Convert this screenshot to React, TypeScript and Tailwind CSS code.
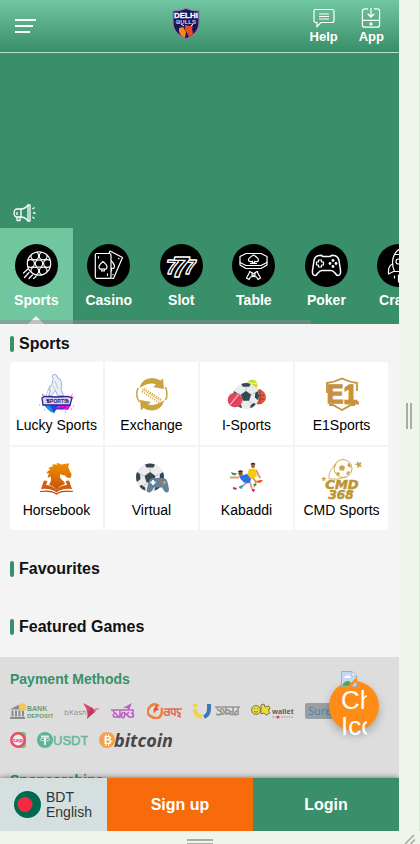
import React from "react";

type Item = { label: string; icon: React.ReactNode };

const CircleIcon = ({ children }: { children: React.ReactNode }) => (
  <svg
    className="size-[43px] rounded-full bg-black"
    viewBox="0 0 43 43"
    fill="none"
    stroke="#fff"
    strokeWidth="1.2"
    strokeLinejoin="round"
    strokeLinecap="round"
    aria-hidden="true"
  >
    {children}
  </svg>
);

const SoccerBall = ({ cx, cy, r }: { cx: number; cy: number; r: number }) => (
  <g transform={`translate(${cx} ${cy}) scale(${r / 14})`}>
    <circle r="14" fill="#e9ebee" />
    <g fill="#37474f">
      <path d="M0-5.5 5.5-1.5 3.4 5h-6.8L-5.5-1.5z" />
      <path d="M-5-13q5-2 10 0L3.500-10h-7z" />
      <path d="M13-5.500q2 5 0 10L9.500 1.500l.5-5z" />
      <path d="M-13-5.500q-2 5 0 10L-9.500 1.500l-.5-5z" />
      <path d="M10.500 9q-2.500 3.500-6 4.300L5 10l3.500-2.800z" />
      <path d="M-10.500 9q2.500 3.500 6 4.300L-5 10l-3.500-2.800z" />
    </g>
    <path
      d="M0-5.500V-10M5.500-1.500 10-3.500M3.400 5 6 9M-3.400 5-6 9M-5.500-1.500-10-3.500"
      stroke="#b5bcc2"
      strokeWidth=".8"
    />
  </g>
);

const categories: Item[] = [
  {
    label: "Sports",
    icon: (
      <CircleIcon>
        <clipPath id="ball">
          <circle cx="24" cy="19.500" r="11.700" />
        </clipPath>
        <g clipPath="url(#ball)">
          <circle cx="24" cy="19.500" r="3.700" />
          <circle cx="32.500" cy="19.500" r="3.900" />
          <circle cx="15.500" cy="19.500" r="3.900" />
          <circle cx="28.200" cy="12" r="3.900" />
          <circle cx="19.800" cy="12" r="3.900" />
          <circle cx="28.200" cy="27" r="3.900" />
          <circle cx="19.800" cy="27" r="3.900" />
        </g>
        <circle cx="24" cy="19.500" r="11.700" />
        <path d="m13 25-4.500 4M14 28.500l-4.500 5M17.500 31 14 34.500M21 32.500l-2.500 2" />
      </CircleIcon>
    ),
  },
  {
    label: "Casino",
    icon: (
      <CircleIcon>
        <path d="m22 9.500 1-2.500 12.500 6.500-9 21-4-.7" />
        <path d="M24.500 17q3 3 3 5.500t-3 1.500v3" />
        <path d="m31.500 14.500.5.300M26 30.500v.5" />
        <rect x="8.300" y="9.500" width="15.700" height="24.800" rx="1.500" fill="#000" />
        <path d="M16 17.500q-4 3.200-4 5.500 0 3 3.300 1.800L14.500 27h3l-.8-2.200Q20 26 20 23q0-2.300-4-5.500z" />
        <path d="M11.500 12.500v1.500M20.500 29.800v1.500" />
      </CircleIcon>
    ),
  },
  {
    label: "Slot",
    icon: (
      <CircleIcon>
        <g
          fill="#000"
          fontFamily="Liberation Sans"
          fontWeight="bold"
          fontStyle="italic"
          strokeWidth="1.300"
        >
          <text x="6" y="30" fontSize="21">7</text>
          <text x="24" y="30" fontSize="21">7</text>
          <text x="12" y="33" fontSize="30">7</text>
        </g>
      </CircleIcon>
    ),
  },
  {
    label: "Table",
    icon: (
      <CircleIcon>
        <path d="M14 9.500h15l6 3v6l-6 3H14l-6-3v-6z" />
        <path d="M8 18.500v2.500l6 3.500h15l6-3.500v-2.500" />
        <path d="M21.500 11q-5 3-5 5 0 2.300 4 1.300v1.700h2v-1.700q4 1 4-1.300 0-2-5-5z" />
        <path d="M18.500 19.500h6" />
        <path d="M17.500 27.500v1l-3 5.500 2.500 1.500 1.500-2.500 2.500-.5.500-1.500.5 1.500 2.500.5 1.500 2.500 2.500-1.500-3-5.500v-1M17.500 27.500l3 1.500M25 27.500l-2.500 1.500M20 29.500h3v3h-3z" />
      </CircleIcon>
    ),
  },
  {
    label: "Poker",
    icon: (
      <CircleIcon>
        <path
          strokeWidth="1.500"
          d="M14 11.500q2.500-.5 4 1h7q1.500-1.500 4-1 4 .5 5 5l1.500 10q.5 5-2.500 5-1.500 0-3-2.500-2-2.500-4-2.500h-9q-2 0-4 2.500-1.500 2.500-3 2.500-3 0-2.500-5l1.500-10q1-4.500 5-5z"
        />
        <path d="M13.500 16h3v2h2v3h-2v2h-3v-2h-2v-3h2z" />
        <g fill="#fff" stroke="none">
          <circle cx="28" cy="16.500" r="1.400" />
          <circle cx="28" cy="22.500" r="1.400" />
          <circle cx="25" cy="19.500" r="1.400" />
          <circle cx="31" cy="19.500" r="1.400" />
        </g>
      </CircleIcon>
    ),
  },
  {
    label: "Crash",
    icon: (
      <CircleIcon>
        <path d="M21.500 5.500q-6 5-6 13 0 5 2 9h8q2-4 2-9 0-8-6-13z" />
        <circle cx="21.500" cy="17.500" r="2.500" />
        <path d="M17.500 10.500h8M15.500 20q-4 2-4 7v3l5-2.500M27.500 20q4 2 4 7v3l-5-2.500" />
        <path d="M17.500 32v2M21.500 31v7M25.500 32v2" />
      </CircleIcon>
    ),
  },
];

const GameIcon = ({ children }: { children: React.ReactNode }) => (
  <svg
    className="h-10 w-11 overflow-visible"
    viewBox="0 0 44 40"
    fill="none"
    aria-hidden="true"
  >
    {children}
  </svg>
);

const sportsGames: Item[] = [
  {
    label: "Lucky Sports",
    icon: (
      <GameIcon>
        <path d="M8 24q-2-3-1-5l4 4zM34 24l4-5-1 4 3-1-4 4z" fill="#f38bd0" />
        <path d="M9 31q5 7 10 8l4-7z" fill="#1495f2" />
        <path d="m15 31 4 8 5-8z" fill="#124cf0" />
        <path d="m22 30 14 1-3 5-9-1z" fill="#e813df" />
        <path
          d="M17 3q.5-3 3-2.500t2 3q4 1 4.500 5t-.5 7l2.500 6h-6l-2-5-4 5h-3l2-5-1.500-.5q1-4 3-6 .5-4 1.500-5z"
          fill="#eef0f6"
          stroke="#7f9bdc"
          strokeWidth=".8"
        />
        <path d="m15 11-4 11M20 7l3 8M18 12l2 4" stroke="#a9b6dc" strokeWidth=".8" />
        <path d="m7 24 3-1.500 11 .5 12-.5 4 1.500-2 7H8z" fill="#dcd6fa" stroke="#27278e" strokeWidth="1.300" />
        <text
          x="22"
          y="29"
          fontSize="5"
          fontWeight="bold"
          fontFamily="Liberation Sans"
          textAnchor="middle"
          fill="#17165e"
        >
          SPORTS
        </text>
        <path d="M11 26h2v3M31 26h2v3" stroke="#17165e" />
        <path d="M14 32.500q8 2 18 0l-4 3H18z" fill="#5830c8" />
        <path d="M4 31h1M38 32h1M9 36h1M30 38h1M36 35h1" stroke="#e254c3" />
      </GameIcon>
    ),
  },
  {
    label: "Exchange",
    icon: (
      <GameIcon>
        <g fill="#cba33b">
          <path d="M9.500 14Q12 4 22 4q5 0 8.500 2.500L33 4.500 34 15l-11-2 3-2.500q-6-3-16.500 3.500z" />
          <path d="M34.500 26Q31 37 21.500 36.500q-5-.5-8-2.500L11 36.500l-1-10.500 11 2-3 2.500q7 2 16.500-4.500z" />
        </g>
        <path d="M8 14q-3 8 1.500 14M35.500 13q3 8 0 13" stroke="#cba33b" strokeWidth="1.500" />
        <path d="m12 15 19 12" stroke="#cba33b" strokeWidth=".8" />
        <path
          d="m14 14.500 18 11.500M12 17.500l17 11"
          stroke="#cba33b"
          strokeWidth="1.500"
          strokeDasharray="1.200 1.200"
        />
      </GameIcon>
    ),
  },
  {
    label: "I-Sports",
    icon: (
      <GameIcon>
        <circle cx="33.500" cy="23" r="7.500" fill="#e4573d" />
        <path d="M30 17q3 6 9 4M30 27q4-4 10-1M35 15v15" stroke="#8d3b35" strokeWidth=".9" />
        <circle cx="27" cy="11" r="5.500" fill="#cbdc2c" />
        <path d="M23 8q4 3 9 1" stroke="#f2f7b0" />
        <SoccerBall cx={21} cy={22} r={13} />
        <circle cx="10" cy="26" r="7.300" fill="#e2445a" />
        <path d="m5 31 9-11" stroke="#f5a9b2" strokeWidth="1.300" />
        <path d="m6.500 31.500 9-10" stroke="#b72c44" strokeWidth=".8" strokeDasharray="1 1" />
      </GameIcon>
    ),
  },
  {
    label: "E1Sports",
    icon: (
      <GameIcon>
        <path
          d="M7 19V9q8-1 15-4.500Q29 8 37 9v8M9 31h4l9 5 9-5h4"
          stroke="#c6923f"
          strokeWidth="1.800"
        />
        <text
          x="22"
          y="29"
          fontSize="25"
          fontWeight="bold"
          fontFamily="Liberation Sans"
          textAnchor="middle"
          fill="#c6923f"
          stroke="#c6923f"
          strokeWidth="1.400"
        >
          E1
        </text>
        <path d="M25 29h14" stroke="#c6923f" strokeWidth="3" />
      </GameIcon>
    ),
  },
  {
    label: "Horsebook",
    icon: (
      <GameIcon>
        <defs>
          <linearGradient id="horse" x1="0" y1="0" x2="0" y2="1">
            <stop offset="0" stopColor="#ee9200" />
            <stop offset="1" stopColor="#c9510c" />
          </linearGradient>
        </defs>
        <path
          fill="url(#horse)"
          d="m34 4.300-.7 4.200q1.200 3 3.200 6.500 0 3-1.500 4l-3-.5-2.500-2.500q-2.500.5-4-1-1.500 3 1 5.500 3 2 3.500 4.500-5 1.500-8.500 6-3-4-7.500-5.500 3-4 1.500-8-2 0-2.500 2-.8-3 1.200-5-2-.5-3 .5 1-3.500 4-4.500-.5-1-2-1 2-2.500 5-2-.5-1.200-1.500-1.500 3-1.500 5.500 0l-.5-2q3 .3 4.500 1.500z"
        />
        <path
          fill="#cf5d0d"
          d="M9 21.500 6 30q10-1 15.500 3.500Q27 29 37 30l-3-8.500-3.500.5 1.500 4q-7 .5-10.500 5-3.500-4.500-10.500-5l1.500-4z"
        />
        <path d="M5 32.500q11-1.500 16.500 2.500Q27 31 38 32.500" stroke="#b9470c" strokeWidth="1.200" />
      </GameIcon>
    ),
  },
  {
    label: "Virtual",
    icon: (
      <GameIcon>
        <SoccerBall cx={20} cy={18.5} r={14} />
        <path
          d="M22 19h12q3 1 3.500 4L39 30q0 4-3 3.500-2-1-4-5h-8q-2 4-4 5-4 .5-3-3.500l1.500-7q.5-3 3.500-4z"
          fill="#64809b"
        />
        <path d="M23 21v5M20.500 23.500h5" stroke="#fff" strokeWidth="1.800" />
        <circle cx="31" cy="23.500" r="1.300" fill="#ef4b4b" />
        <circle cx="34.500" cy="23.500" r="1.300" fill="#f0ba2e" />
        <circle cx="32.800" cy="25.500" r="1" fill="#4fb96c" />
      </GameIcon>
    ),
  },
  {
    label: "Kabaddi",
    icon: (
      <GameIcon>
        <circle cx="28" cy="7" r="2" fill="#a8643a" />
        <path d="M26 5.500q2-2 4 0" stroke="#352a2a" strokeWidth="1.500" />
        <path d="m24 10 6-.5 2 8-6 3-4-5z" fill="#fbc90e" />
        <path d="m31 11 3 6 1.500 2M28 19l3 4-2 5" stroke="#d89464" strokeWidth="1.800" />
        <circle cx="15.500" cy="14.500" r="2.200" fill="#8a5536" />
        <path d="M13.500 13q2-2 4 0" stroke="#322a2d" strokeWidth="1.500" />
        <path d="m14 17 8-2 4 5-1 4-5 .5-4-4z" fill="#2b70e4" />
        <path d="M14 18.500H5M21 24l-3 3-4 1M25 23l2 7" stroke="#e09c72" strokeWidth="1.800" />
        <path d="m15 27 3-1-1 4-3-1z" fill="#18a7c4" />
        <path d="m8 28 4 1-1 2-3-1zM27 30h3l-1 3-2-1z" fill="#e91e63" />
        <path d="m6 13 3 1 3 0-2 2.500-3-1z" fill="#20996a" />
        <path d="m31 22 4-1 3 0-2 2.500-3 .5z" fill="#ef5b23" />
        <path d="m28 25 4 0-2 2z" fill="#1e8a67" />
      </GameIcon>
    ),
  },
  {
    label: "CMD Sports",
    icon: (
      <GameIcon>
        <circle cx="23" cy="9.500" r="9" fill="#fffdf6" stroke="#c9a24a" strokeWidth=".9" />
        <g fill="#c9a24a">
          <path d="m22 6 3 2-1 3.500h-4L19 8zM28 4l2.500 1v4l-3-2zM17 4l-2 4-.5-2zM17 13l3 1-1 3-3-2zM28 12l2 1-2 3-2-1z" />
          <path d="m37 2 1.500 2 3-1-1 3 2 2-3-.5-2 2v-3l-3-1.500 2.500-.5zM4 17l.7 2h2L5 20.300l.5 2-1.500-1-2 1 .7-2-1.500-1.300h2z" />
        </g>
        <path d="M14 7q-6 6-5 13 10 1 17-2" stroke="#c9a24a" strokeWidth=".8" />
        <g
          fill="#bd9434"
          stroke="#bd9434"
          strokeWidth=".6"
          fontFamily="DejaVu Sans"
          fontWeight="bold"
          fontStyle="italic"
          textAnchor="middle"
        >
          <text x="22" y="30" fontSize="13">CMD</text>
          <text x="21" y="40" fontSize="12">368</text>
        </g>
      </GameIcon>
    ),
  },
];

const Logo = ({
  name,
  className,
  children,
}: {
  name: string;
  className: string;
  children: React.ReactNode;
}) => (
  <svg role="img" aria-label={name} className={`h-4 shrink-0 ${className}`} fill="none">
    {children}
  </svg>
);

const PaymentLogos = () => (
  <div className="mt-3.5 flex flex-wrap gap-x-[11px] gap-y-[13px] font-['Open_Sans',sans-serif] font-normal">
    <Logo name="Bank deposit" className="w-[43px]">
      <path d="M0 6.500 8 2l7 4.500zM1.500 7.500h2v6h-2zM5 7.500h2v6H5zM8.500 7.500h2v6h-2zM12 7.500h2v6h-2zM0 14h15v2H0z" fill="#8b8b8b" />
      <circle cx="12.500" cy="4" r="3.800" fill="#f3c55d" />
      <g fill="#63a06d" fontFamily="Liberation Sans" fontWeight="bold">
        <text x="17" y="8" fontSize="7">BANK</text>
        <text x="17" y="15" fontSize="6">DEPOSIT</text>
      </g>
    </Logo>
    <Logo name="bKash" className="w-9">
      <text x="0" y="12" fontSize="8" fill="#8f8f8f">bKash</text>
      <path d="m19 0 8 4 2 5-5 3-2-7z" fill="#d94a73" />
      <path d="m27 4 5 4-9 8 1-7z" fill="#c93561" />
      <path d="m30 7 2-2 4 1-4 1-2 3z" fill="#e3708f" />
    </Logo>
    <Logo name="Rocket" className="w-[25px]">
      <path
        d="M0 7h23M2 8l6 6H3q-2-2 1-4M9 8v7M12 9q-3 4 0 6 3-2 1-6l5 5M18 9q-3 2 0 5h4q2-3-2-4M22 8v5"
        stroke="#bd5cc5"
        strokeWidth="1.500"
      />
      <path d="m12 5 9-5-3 7-2-2z" fill="#bd5cc5" />
    </Logo>
    <Logo name="Nagad" className="w-[35px]">
      <path d="M12 3Q6-1 2 5T5 14t9-2 0-7" stroke="#ef8138" strokeWidth="2.500" />
      <path d="M11 1q-2 3 1 6-4 0-5 4-2-6 4-10z" fill="#e8552f" />
      <path
        d="M17 6h18M22 6v7M22 10q-3-3-5 0 1 3 4 2M25 7q-2 3 1 4h2M28 6v7M31 7q-2 3 1 3t-1 3l3 1"
        stroke="#e36850"
        strokeWidth="1.500"
      />
    </Logo>
    <Logo name="Upay" className="w-[47px]">
      <path d="M2 1v3M2 6q0 7 7 8" stroke="#efd43f" strokeWidth="4" />
      <path d="M16 1v5q0 6-5 8" stroke="#4376b5" strokeWidth="4" />
      <path
        d="M22 4h25M25 4q-2 3 2 4t-1 4l-3-1M27 7q3-3 4 1t-3 3M33 4v8M33 7q5-1 3 4l-3-1M40 4v8M40 9q-4-1-3 2l3 1M45 4v8M45 8q-4 0-3 4l3-1"
        stroke="#969696"
        strokeWidth="1.600"
      />
    </Logo>
    <Logo name="OK wallet" className="w-[43px]">
      <circle cx="5" cy="7" r="4.500" fill="#eadc3c" stroke="#686334" strokeWidth=".8" />
      <path d="m10 2 3-1 1 3 4-1 1 3-2 1 2 3-4 2-2-2-3 1z" fill="#eadc3c" stroke="#686334" strokeWidth=".8" />
      <path d="M3 8q2 3 4 0M3 5.500h1M6 5.500h1" stroke="#686334" strokeWidth=".8" />
      <text x="21" y="11" fontSize="7" fontWeight="bold" fill="#5c5c5c">wallet</text>
      <path d="M21 14h4M30 14h12" stroke="#b5a1a3" strokeWidth="1.200" strokeDasharray="2 .5" />
      <circle cx="27" cy="14" r="1.600" fill="#e54452" />
    </Logo>
    <Logo name="SureCash" className="w-[65px]">
      <rect width="65" height="16" rx="2" fill="#9c9fa1" />
      <text x="3" y="12" fontSize="11" fill="#4284bd">SureCash</text>
    </Logo>
    <Logo name="Tap" className="w-4">
      <path d="M8 0h5q3 0 3 3v10q0 3-3 3H8z" fill="#5cc886" />
      <circle cx="8" cy="8" r="6.700" fill="#f4e9e9" stroke="#e84c60" strokeWidth="2.500" />
      <text x="3" y="10" fontSize="6" fontWeight="bold" fill="#df4962">tap</text>
    </Logo>
    <Logo name="USDT" className="w-[51px]">
      <circle cx="8" cy="8" r="8" fill="#5cb399" />
      <path d="M4 4.500h8M8 4v9" stroke="#e2efeb" strokeWidth="2" />
      <ellipse cx="8" cy="7.500" rx="5" ry="1.400" stroke="#e2efeb" strokeWidth=".8" />
      <text x="16" y="13" fontSize="13" fontFamily="Liberation Sans" fill="#66b69d" stroke="#66b69d" strokeWidth=".5">USDT</text>
    </Logo>
    <Logo name="Bitcoin" className="w-20 overflow-visible">
      <circle cx="8" cy="8" r="8" fill="#f2a348" />
      <text x="5" y="12" fontSize="11" fontWeight="bold" fill="#fff" fontFamily="Liberation Sans">B</text>
      <path d="M7 2.500v2M9.500 2.500v2M7 12v2M9.500 12v2" stroke="#fff" />
      <text x="15" y="15" fontSize="18" fontWeight="bold" fontStyle="italic" fill="#484848">bitcoin</text>
    </Logo>
  </div>
);

const SectionTitle = ({ children }: { children: React.ReactNode }) => (
  <h2 className="flex h-6 items-center gap-[5px] text-base font-bold text-[#111]">
    <span className="h-4 w-1 rounded-sm bg-[#388f69]" />
    {children}
  </h2>
);

const Header = () => (
  <header className="grid h-[53px] shrink-0 grid-cols-[1fr_56px_1fr] border-b border-[#bfdccd] bg-linear-to-b from-[#70c7a1] to-[#388e68] px-[15px]">
    <button type="button" aria-label="Menu" className="flex flex-col items-start gap-1 pt-[19px]">
      <span className="h-0.5 w-[21px] bg-white" />
      <span className="h-0.5 w-[18px] bg-white" />
      <span className="h-0.5 w-[15px] bg-white" />
    </button>
    <a href="#home" aria-label="Delhi Bulls" className="pt-2">
      <svg className="h-8 w-7" viewBox="0 0 28 32">
        <path
          d="M1 3q7 0 13-2.500Q20 3 27 3v11q0 12-13 17Q1 26 1 14z"
          fill="#17145a"
          stroke="#8f8099"
          strokeWidth="1.200"
        />
        <text x="14" y="10" fontSize="8" fontWeight="bold" fontFamily="Liberation Sans" textAnchor="middle" fill="#fff" stroke="#fff" strokeWidth=".3">
          DELHI
        </text>
        <text x="14" y="16" fontSize="6" fontWeight="bold" fontFamily="Liberation Sans" textAnchor="middle" fill="#d9d7e8">
          BULLS
        </text>
        <path d="m7 20 4-1 3 5-1 6q-7-3-6-10z" fill="#f38a20" />
        <path d="m13 17 5 1 3-1-1 4 1 5-4 3-2-4-2-3z" fill="#e84824" />
        <path d="m9 16 3 2M21 16l-2 2" stroke="#fff" />
        <circle cx="4" cy="14" r=".8" fill="#c43852" />
        <circle cx="24" cy="14" r=".8" fill="#c43852" />
      </svg>
    </a>
    <div className="flex justify-end gap-[21px] pt-2 text-[13px] leading-[18px] font-bold text-white">
      <a href="#help" className="flex flex-col items-center">
        <svg className="h-5 w-[22px]" viewBox="0 0 22 20" fill="none" stroke="#fff">
          <path d="M3 1.500h16q2 0 2 2v9q0 2-2 2H8l-4 4v-4H3q-2 0-2-2v-9q0-2 2-2z" strokeWidth="1.200" />
          <path d="M6 6h10M6 8.500h10M6 11h10" />
        </svg>
        Help
      </a>
      <a href="#app" className="flex flex-col items-center">
        <svg className="h-5 w-5" viewBox="0 0 20 21" fill="none" stroke="#fff" strokeWidth="1.300">
          <path d="M7 .8H3.500Q1 .8 1 3.500v14Q1 20.200 3.500 20.200h13q2.500 0 2.500-2.700v-14Q19 .8 16.500 .8H13M1 13h18M10 0v9M6.500 6l3.500 3.500L13.500 6" />
          <circle cx="10" cy="16.700" r="1" fill="#fff" />
        </svg>
        App
      </a>
    </div>
  </header>
);

const CategoryNav = () => (
  <nav className="relative flex h-24 shrink-0 overflow-hidden">
    {categories.map(({ label, icon }, i) => (
      <button
        key={label}
        type="button"
        className={`relative flex w-2/11 shrink-0 flex-col items-center pt-4 ${
          i === 0 ? "bg-[#70c69f]" : ""
        }`}
      >
        {icon}
        <span className="mt-[3px] text-sm leading-5 font-bold text-white">{label}</span>
        {i === 0 && (
          <span className="absolute bottom-0 border-x-8 border-b-8 border-x-transparent border-b-[#f4f4f4]" />
        )}
      </button>
    ))}
    <div className="absolute bottom-0 left-0 h-1 w-[78%] bg-[#8e8a8e]/50" />
  </nav>
);

const ChatButton = () => (
  <button
    type="button"
    aria-label="Chat"
    className="absolute right-5 bottom-[100px] size-[50px] rounded-full bg-[#ff8c16] shadow-[0_4px_8px_rgba(0,0,0,0.25)]"
  >
    <span className="absolute -top-2.5 left-3 block w-[26px] overflow-hidden text-left text-[26px] leading-[26px] text-white">
      <svg className="size-4" viewBox="0 0 16 16">
        <path d="M.5.500h10.500l4.500 4.500v10.500H.5z" fill="#c4d7f5" stroke="#a8aeb8" />
        <path d="M3 7q0-2 2-2 1-2 3 0 2 0 2 2z" fill="#fff" />
        <path d="M1 15q2-5 6-5 3 0 4 5z" fill="#58a83d" />
        <path d="M16 6 6 16h4l6-6z" fill="#ff8c16" />
        <path d="M11 .5V5h4.500z" fill="#fff" stroke="#a8aeb8" strokeWidth=".7" />
      </svg>
      Chat
      <br />
      Icon
    </span>
  </button>
);

const BottomBar = () => (
  <div className="relative grid h-[53px] shrink-0 grid-cols-[107px_1fr_1fr] text-base font-bold text-white shadow-[0_0_6px_rgba(0,0,0,0.55)]">
    <button
      type="button"
      className="flex items-center gap-[5px] bg-[#d5dfdf] pl-3.5 text-left text-sm leading-[15px] font-medium text-[#333]"
    >
      <svg className="size-[27px]" viewBox="0 0 27 27" aria-hidden="true">
        <circle cx="13.500" cy="13.500" r="13.500" fill="#006a4e" />
        <circle cx="11" cy="13.500" r="7.500" fill="#f42a41" />
      </svg>
      <span>
        BDT
        <br />
        English
      </span>
    </button>
    <button type="button" className="bg-[#f76b0a]">
      Sign up
    </button>
    <button type="button" className="bg-[#388f69]">
      Login
    </button>
  </div>
);

export default function App() {
  return (
    <div className="flex h-screen flex-col overflow-hidden bg-[#eff5ea] font-['Liberation_Sans',Arial,sans-serif]">
      <div className="flex min-h-0 flex-1">
        <div className="relative flex min-w-0 flex-1 flex-col overflow-hidden bg-[#388f69]">
          <Header />
          <main className="flex min-h-0 flex-1 flex-col overflow-hidden">
            <div className="flex h-[175px] shrink-0 items-end px-[13px] pb-1.5">
              <svg className="h-[18px] w-6" viewBox="0 0 24 18" fill="none" stroke="#fff" strokeWidth="1.300" strokeLinejoin="round" aria-hidden="true">
                <path d="M3 5h5v8H3Q1 12 1 9t2-4zM8 5q4 0 7-4v16q-3-4-7-4M15 1h2v16h-2M4 13v3.500h3V13M19.500 5l2-1.500M20 9h2.500M19.500 13l2 1.500M4 8v3" />
              </svg>
            </div>
            <CategoryNav />
            <section className="shrink-0 bg-[#f4f4f4] px-2.5 pt-2 pb-[18px]">
              <SectionTitle>Sports</SectionTitle>
              <div className="mt-1.5 mr-px grid grid-cols-4 gap-0.5 overflow-hidden rounded">
                {sportsGames.map(({ label, icon }) => (
                  <a
                    key={label}
                    href="#game"
                    className="flex flex-col items-center bg-white pt-3 pb-2.5 text-sm leading-5 whitespace-nowrap text-black"
                  >
                    {icon}
                    <span className="mt-px">{label}</span>
                  </a>
                ))}
              </div>
              <div className="mt-[27px] flex flex-col gap-[34px]">
                <SectionTitle>Favourites</SectionTitle>
                <SectionTitle>Featured Games</SectionTitle>
              </div>
            </section>
            <footer className="min-h-0 flex-1 bg-[#ddd] px-2.5 pt-3 text-sm leading-5 font-bold text-[#388f69]">
              <h3>Payment Methods</h3>
              <PaymentLogos />
              <h3 className="mt-[22px]">Sponsorships</h3>
            </footer>
          </main>
          <BottomBar />
          <ChatButton />
        </div>
        <div className="flex w-[21px] shrink-0 items-center justify-center gap-0.5 border-r border-[#e0ebd8]">
          <span className="h-[26px] w-0.5 bg-[#a9aca7]" />
          <span className="h-[26px] w-0.5 bg-[#a9aca7]" />
        </div>
      </div>
      <div className="grid h-[13px] shrink-0 grid-cols-[1fr_21px]">
        <div className="flex flex-col items-center gap-0.5 pt-2">
          <span className="h-0.5 w-[26px] shrink-0 bg-[#a9aca7]" />
          <span className="h-0.5 w-[26px] shrink-0 bg-[#a9aca7]" />
        </div>
        <svg className="h-[13px] w-[21px]" viewBox="0 0 21 13" stroke="#a4a7a2" strokeWidth="1.500">
          <path d="M6 13 15 4M11.500 13l4.500-4.500" />
        </svg>
      </div>
    </div>
  );
}
